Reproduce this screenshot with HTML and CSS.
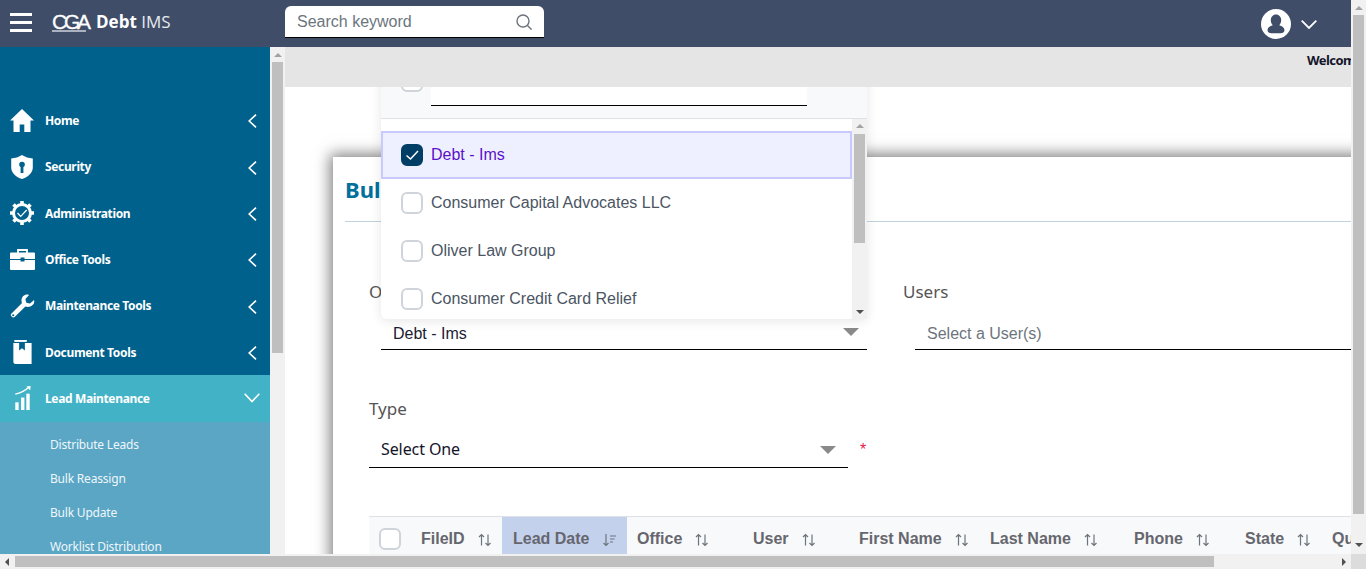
FILE: index.html
```html
<!DOCTYPE html>
<html lang="en">
<head>
<meta charset="utf-8">
<title>Debt IMS</title>
<link rel="stylesheet" href="styles.css">
</head>
<body>
<div class="shell">
  <div class="app">
    <header class="header">
      <div class="hamburger"><span></span><span></span><span></span></div>
      <div class="logo"><span class="logo-mark">CGA</span><span class="logo-sub"></span></div>
      <div class="brand"><b>Debt</b> IMS</div>
      <div class="search">
        <span class="search-text">Search keyword</span>
        <svg class="search-icon" viewBox="0 0 16 16"><circle cx="7" cy="7" r="6" fill="none" stroke="#6c757d" stroke-width="1.4"/><path d="M11.4 11.4 15.6 15.6" stroke="#6c757d" stroke-width="1.4" fill="none"/></svg>
      </div>
      <div class="user">
        <svg class="user-icon" viewBox="0 0 30 30"><circle cx="15" cy="15" r="15" fill="#fff"/><path d="M15 5.500c-3.100 0-5.200 2.500-5.200 5.800 0 2 .8 3.800 2 5-2.900.7-5.300 2.300-5.300 5 0 2 1.800 3 4 3h9c2.200 0 4-1 4-3 0-2.700-2.400-4.300-5.300-5 1.200-1.200 2-3 2-5 0-3.300-2.100-5.800-5.200-5.800z" fill="#3f4d68"/></svg>
        <svg class="user-chev" viewBox="0 0 16 9"><path d="M.7.7 8 8 15.300.7" fill="none" stroke="#fff" stroke-width="1.800"/></svg>
      </div>
    </header>
    <div class="body">
      <nav class="sidebar">
        <ul class="menu">
          <li class="menu-item">
            <svg class="menu-icon" viewBox="0 0 24 24"><path d="M12 1 0 12.500h3.500V24h6.200v-7.500h4.600V24h6.200V12.500H24z" fill="#fff"/></svg>
            <span class="menu-label">Home</span>
            <svg class="chev-left" viewBox="0 0 9 14"><path d="M8 .7 1.200 7 8 13.300" fill="none" stroke="#fff" stroke-width="1.600"/></svg>
          </li>
          <li class="menu-item">
            <svg class="menu-icon" viewBox="0 0 24 24"><path d="M12 0C9 2 5 3.200 1.200 3.500v9C1.200 18 6 22 12 24c6-2 10.800-6 10.800-11.500v-9C19 3.200 15 2 12 0z" fill="#fff"/><circle cx="12" cy="9.500" r="2.800" fill="#00618c"/><rect x="10.600" y="10" width="2.800" height="8" fill="#00618c"/></svg>
            <span class="menu-label">Security</span>
            <svg class="chev-left" viewBox="0 0 9 14"><path d="M8 .7 1.200 7 8 13.300" fill="none" stroke="#fff" stroke-width="1.600"/></svg>
          </li>
          <li class="menu-item">
            <svg class="menu-icon" viewBox="0 0 24 24"><circle cx="12" cy="12" r="8.500" fill="none" stroke="#fff" stroke-width="3"/><path d="M12 0v4M12 20v4M0 12h4M20 12h4M3.500 3.500l3 3M17.500 17.500l3 3M20.500 3.500l-3 3M6.500 17.500l-3 3" stroke="#fff" stroke-width="3.600"/><path d="M7.500 12l3.200 3.400 6-6.400" fill="none" stroke="#fff" stroke-width="1.300"/></svg>
            <span class="menu-label">Administration</span>
            <svg class="chev-left" viewBox="0 0 9 14"><path d="M8 .7 1.200 7 8 13.300" fill="none" stroke="#fff" stroke-width="1.600"/></svg>
          </li>
          <li class="menu-item">
            <svg class="menu-icon wide" viewBox="0 0 25 22"><path d="M8 5V2h9v3" fill="none" stroke="#fff" stroke-width="1.800"/><path d="M1 4.500h23a1 1 0 0 1 1 1V11H14.500V9.500h-4V11H0V5.500a1 1 0 0 1 1-1z" fill="#fff"/><path d="M0 12h10.500v1.500h4V12H25v9a1 1 0 0 1-1 1H1a1 1 0 0 1-1-1z" fill="#fff"/></svg>
            <span class="menu-label">Office Tools</span>
            <svg class="chev-left" viewBox="0 0 9 14"><path d="M8 .7 1.200 7 8 13.300" fill="none" stroke="#fff" stroke-width="1.600"/></svg>
          </li>
          <li class="menu-item">
            <svg class="menu-icon wide" viewBox="0 0 25 25"><path d="M24.500 6.200 20.300 10l-3.800-1-1-3.800L19.300 1C15.500-.5 11 2.500 11.500 7.500c.1 1 .2 1.500.5 2L.8 20.500c-1.800 1.800 1.700 5.300 3.500 3.500L15.500 13c5 1.700 10.500-2 9-6.800z" fill="#fff"/><circle cx="2.800" cy="22.200" r="1.100" fill="#00618c"/></svg>
            <span class="menu-label">Maintenance Tools</span>
            <svg class="chev-left" viewBox="0 0 9 14"><path d="M8 .7 1.200 7 8 13.300" fill="none" stroke="#fff" stroke-width="1.600"/></svg>
          </li>
          <li class="menu-item">
            <svg class="menu-icon" viewBox="0 0 24 25"><path d="M4 0h13v2H4z" fill="#fff"/><path d="M3 3h6v8l3-2.500 3 2.500V3h7v22H4.500L3 23.500z" fill="#fff"/></svg>
            <span class="menu-label">Document Tools</span>
            <svg class="chev-left" viewBox="0 0 9 14"><path d="M8 .7 1.200 7 8 13.300" fill="none" stroke="#fff" stroke-width="1.600"/></svg>
          </li>
          <li class="menu-item active">
            <svg class="menu-icon" viewBox="0 0 24 25"><path d="M5 8.500C10 7.500 15 5 19.500 1" fill="none" stroke="#fff" stroke-width="1.500"/><path d="M16.500.5 21 0l-.5 4.500z" fill="#fff"/><rect x="5" y="17" width="3.500" height="8" fill="#fff"/><rect x="11" y="12" width="3.500" height="13" fill="#fff"/><rect x="16.500" y="8" width="3.500" height="17" fill="#fff"/></svg>
            <span class="menu-label">Lead Maintenance</span>
            <svg class="chev-down" viewBox="0 0 16 10"><path d="M.7.7 8 8.500 15.300.7" fill="none" stroke="#fff" stroke-width="1.600"/></svg>
          </li>
        </ul>
        <ul class="submenu">
          <li>Distribute Leads</li>
          <li>Bulk Reassign</li>
          <li>Bulk Update</li>
          <li>Worklist Distribution</li>
        </ul>
      </nav>
      <div class="side-scroll">
        <span class="arrow-up"></span>
        <span class="side-thumb"></span>
      </div>
      <main class="content">
        <div class="topbar"><span class="welcome">Welcome Admin User</span></div>
        <div class="workspace">
          <section class="card">
            <h1 class="title">Bulk Update</h1>
            <hr class="rule">
            <div class="row first">
              <div class="field org">
                <label class="label">Organization</label>
                <div class="select indented"><span class="value-arial">Debt - Ims</span><span class="caret"></span></div>
              </div>
              <div class="field users">
                <label class="label">Users</label>
                <div class="select indented"><span class="placeholder">Select a User(s)</span></div>
              </div>
            </div>
            <div class="row second">
              <div class="field type">
                <label class="label">Type</label>
                <div class="select tall"><span class="value-ubuntu">Select One</span><span class="caret"></span></div>
              </div>
              <span class="req">*</span>
            </div>
            <div class="thead">
              <div class="th"><span class="check"></span></div>
              <div class="th">FileID<svg class="sort" viewBox="0 0 14 14"><use href="#sort-alt"/></svg></div>
              <div class="th sorted">Lead Date<svg class="sort" viewBox="0 0 14 14"><path d="M4 1v11.500M1.500 10 4 12.500 6.500 10" fill="none" stroke="#6c757d" stroke-width="1.200"/><path d="M8 3h6M8 6h4.500M8 9h3" stroke="#6c757d" stroke-width="1.200"/></svg></div>
              <div class="th">Office<svg class="sort" viewBox="0 0 14 14"><use href="#sort-alt"/></svg></div>
              <div class="th">User<svg class="sort" viewBox="0 0 14 14"><use href="#sort-alt"/></svg></div>
              <div class="th">First Name<svg class="sort" viewBox="0 0 14 14"><use href="#sort-alt"/></svg></div>
              <div class="th">Last Name<svg class="sort" viewBox="0 0 14 14"><use href="#sort-alt"/></svg></div>
              <div class="th">Phone<svg class="sort" viewBox="0 0 14 14"><use href="#sort-alt"/></svg></div>
              <div class="th">State<svg class="sort" viewBox="0 0 14 14"><use href="#sort-alt"/></svg></div>
              <div class="th">Queue</div>
            </div>
          </section>
          <div class="panel">
            <div class="panel-head">
              <span class="check"></span>
              <div class="filter"><svg class="filter-icon" viewBox="0 0 16 16"><circle cx="7" cy="7" r="6" fill="none" stroke="#6c757d" stroke-width="1.400"/><path d="M11.400 11.400 15.600 15.600" stroke="#6c757d" stroke-width="1.400"/></svg></div>
            </div>
            <div class="panel-body">
              <ul class="options">
                <li class="option selected"><span class="check on"><svg viewBox="0 0 22 22"><path d="M5.500 11.500 9.500 15 17 7" fill="none" stroke="#fff" stroke-width="1.500"/></svg></span>Debt - Ims</li>
                <li class="option"><span class="check"></span>Consumer Capital Advocates LLC</li>
                <li class="option"><span class="check"></span>Oliver Law Group</li>
                <li class="option"><span class="check"></span>Consumer Credit Card Relief</li>
              </ul>
              <div class="panel-scroll">
                <span class="arrow-up"></span>
                <span class="panel-thumb"></span>
                <span class="arrow-down"></span>
              </div>
            </div>
          </div>
        </div>
      </main>
    </div>
  </div>
  <div class="vscroll">
    <span class="arrow-up"></span>
    <span class="vthumb"></span>
    <span class="arrow-down dark"></span>
  </div>
  <div class="hscroll">
    <span class="arrow-left"></span>
    <span class="hthumb"></span>
    <span class="arrow-right"></span>
  </div>
  <div class="corner"></div>
</div>
<svg class="defs" width="0" height="0"><defs><g id="sort-alt" fill="none" stroke="#6c757d" stroke-width="1.200"><path d="M3.500 12.500V1.500M1 4 3.500 1.500 6 4"/><path d="M10 1.500v11M7.500 10 10 12.500 12.500 10"/></g></defs></svg>
</body>
</html>
```
FILE: styles.css
```css
* { box-sizing: border-box; }
html, body { margin: 0; height: 100%; overflow: hidden; }
body { font-family: "Liberation Sans", Arial, sans-serif; background: #fff; }
ul { list-style: none; margin: 0; padding: 0; }
.defs { position: absolute; }

.shell {
  display: grid;
  grid-template-columns: 1351px 15px;
  grid-template-rows: 554px 15px;
  width: 1366px;
  height: 569px;
}
.app { display: flex; flex-direction: column; min-width: 0; min-height: 0; overflow: hidden; }

/* header */
.header {
  flex: 0 0 47px;
  display: flex;
  align-items: center;
  background: #3f4d68;
  color: #fff;
  padding-left: 10px;
}
.hamburger { display: flex; flex-direction: column; gap: 5px; width: 22px; margin-top: -2px; }
.hamburger span { display: block; height: 3px; background: #fff; }
.logo { position: relative; width: 34px; margin-left: 20px; height: 18px; margin-top: -1px; }
.logo-mark {
  display: block;
  font: 400 21px/16px "Liberation Sans", sans-serif;
  letter-spacing: -3.200px;
  color: #fff;
  -webkit-text-stroke: .3px #fff;
}
.logo-sub { display: block; height: 2px; background: #aab2c0; }
.brand { margin-left: 10px; font: 400 17px/22px "Open Sans", sans-serif; color: #e6e9ee; width: 189px; margin-top: -3px; }
.brand b { color: #fff; }
.search {
  width: 259px;
  height: 32px;
  display: flex;
  align-items: center;
  justify-content: space-between;
  margin-top: -3px;
  padding: 0 12px;
  background: #fff;
  border-bottom: 1px solid #000;
  border-radius: 6px 6px 0 0;
}
.search-text { font-size: 16px; color: #6c757d; }
.search-icon { width: 16px; height: 16px; }
.user { display: flex; align-items: center; margin-left: auto; margin-right: 34px; gap: 10px; }
.user-icon { width: 30px; height: 30px; }
.user-chev { width: 16px; height: 9px; margin-top: 2px; }

/* body */
.body { flex: 1; display: flex; min-height: 0; }
.sidebar {
  flex: 0 0 270px;
  background: #00618c;
  padding-top: 50.300px;
  overflow: hidden;
  font-family: "Noto Sans", sans-serif;
  color: #fff;
}
.menu-item {
  display: flex;
  align-items: center;
  height: 46.330px;
  padding: 0 10px;
  font-size: 12px;
  font-weight: 700;
}
.menu-icon { width: 24px; height: 24px; flex: none; margin-right: 11px; }
.menu-icon.wide { width: 25px; margin-right: 10px; }
.menu-label { flex: 1; letter-spacing: -.35px; }
.chev-left { width: 9px; height: 14px; margin: 2px 3px 0 0; }
.chev-down { width: 16px; height: 10px; margin: 0 0 0 0; }
.menu-item.active { background: #42b2c6; }
.submenu { background: #5ba6c5; height: 140px; padding-top: 6px; }
.submenu li {
  height: 34px;
  line-height: 34px;
  padding-left: 50px;
  font-size: 12px;
  color: #eef6fa;
  letter-spacing: -.2px;
}
.side-scroll {
  flex: 0 0 15px;
  background: #f1f1f1;
  display: flex;
  flex-direction: column;
  align-items: center;
  padding-top: 6px;
}
.side-thumb { display: block; width: 11px; height: 291px; margin-top: 5px; background: #bfbfbf; }

.arrow-up, .arrow-down, .arrow-left, .arrow-right { display: block; width: 0; height: 0; flex: none; }
.arrow-up { border-left: 4px solid transparent; border-right: 4px solid transparent; border-bottom: 4px solid #a3a3a3; }
.arrow-down { border-left: 4px solid transparent; border-right: 4px solid transparent; border-top: 4px solid #505050; }
.arrow-left { border-top: 4px solid transparent; border-bottom: 4px solid transparent; border-right: 4px solid #505050; }
.arrow-right { border-top: 4px solid transparent; border-bottom: 4px solid transparent; border-left: 4px solid #505050; }

/* content */
.content { flex: 1; min-width: 0; display: flex; flex-direction: column; overflow: hidden; }
.topbar {
  position: relative;
  z-index: 3;
  flex: 0 0 40px;
  background: #e5e5e5;
  padding: 5px 0 0 1022px;
  white-space: nowrap;
  overflow: hidden;
  font: 700 13px/17px "Noto Sans", sans-serif;
  letter-spacing: -.55px;
  color: #14142b;
}
.workspace { position: relative; flex: 1; min-height: 0; padding: 70px 0 0 48px; background: #fff; }

.card {
  width: 1100px;
  height: 500px;
  padding: 18px 0 0 12px;
  background: #fff;
  box-shadow: 0 0 14px 3px rgba(0,0,0,.5);
}
.title { margin: 0 0 18px; font: 700 22px/28px "Noto Sans", sans-serif; color: #00709c; }
.rule { margin: 0; border: 0; border-top: 1px solid #bfd4dc; }
.row { display: flex; margin-left: 24px; }
.row.first { margin-top: 60px; }
.row.second { margin-top: 49px; }
.label { display: block; font: 400 17px/20px "Noto Sans", sans-serif; color: #555; margin-bottom: 16px; }
.field.org { width: 534px; }
.field.users { width: 500px; }
.field.type { width: 479px; }
.field.type .label { margin-bottom: 14px; }
.select {
  display: flex;
  align-items: center;
  justify-content: space-between;
  height: 32px;
  padding: 0 8px 0 12px;
  border-bottom: 1px solid #000;
}
.select.indented { margin-left: 12px; }
.field.org .select { width: 486px; }
.select.tall { height: 35px; padding: 0 12px 2px 12px; }
.select.tall .caret { margin-top: 2px; }
.value-arial { font-size: 16px; color: #1c1c33; }
.value-ubuntu { font: 400 16px/20px "Noto Sans", sans-serif; color: #14142b; letter-spacing: -.1px; }
.placeholder { font-size: 16px; color: #6c757d; }
.caret { width: 0; height: 0; border-left: 8px solid transparent; border-right: 8px solid transparent; border-top: 8px solid #8a8a8a; margin-top: -4px; }
.req { margin: 44px 0 0 12px; font: 400 16px/14px "Liberation Sans", sans-serif; color: #e8174a; }

.thead {
  display: grid;
  grid-template-columns: 42px 91px 125px 116px 106px 131px 144px 111px 87px 100px;
  height: 39px;
  margin: 48px 0 0 24px;
  background: #f8f9fa;
  border-top: 1px solid #dee2e6;
  font-weight: 700;
  font-size: 16px;
  color: #66666e;
}
.th { display: flex; align-items: center; padding: 6px 0 0 10px; white-space: nowrap; overflow: hidden; }
.th.sorted { background: #c3d1ed; padding-left: 11px; }
.sort { width: 14px; height: 14px; margin: 2px 0 0 13px; flex: none; }

.check {
  display: block;
  flex: none;
  width: 22px;
  height: 22px;
  background: #fff;
  border: 2px solid #ced4da;
  border-radius: 6px;
}
.check.on { background: #003e66; border-color: #003e66; position: relative; }
.check.on svg { position: absolute; left: -2px; top: -2px; width: 22px; height: 22px; }

/* dropdown */
.panel {
  position: absolute;
  z-index: 2;
  left: 96px;
  top: -37px;
  width: 486px;
  height: 269px;
  display: flex;
  flex-direction: column;
  background: #fff;
  border-radius: 0 0 6px 6px;
  box-shadow: 0 2px 12px rgba(0,0,0,.1);
}
.panel-head {
  flex: 0 0 69px;
  display: flex;
  align-items: flex-start;
  padding: 20px 0 0 20px;
  background: #f8f9fa;
  border-bottom: 1px solid #dee2e6;
}
.filter {
  position: relative;
  width: 376px;
  height: 46px;
  margin: -10px 0 0 8px;
  background: #fff;
  border-bottom: 1px solid #000;
}
.filter-icon { position: absolute; right: 6px; top: 11px; width: 16px; height: 16px; }
.panel-body { flex: 1; display: flex; min-height: 0; }
.options { flex: 1; padding-top: 12px; overflow: hidden; }
.option {
  display: flex;
  align-items: center;
  gap: 8px;
  height: 48px;
  padding-left: 18px;
  font-size: 16px;
  color: #4b5563;
  border: 2px solid transparent;
}
.option.selected { background: #eef0ff; border-color: #c7c9ff; color: #5b10c9; }
.panel-scroll {
  flex: 0 0 15px;
  display: flex;
  flex-direction: column;
  align-items: center;
  background: #f1f1f1;
  padding-top: 5px;
}
.panel-thumb { display: block; width: 11px; height: 109px; margin-top: 6px; background: #bfbfbf; }
.panel-scroll .arrow-down { margin-top: auto; margin-bottom: 5px; }

/* page scrollbars */
.vscroll {
  display: flex;
  flex-direction: column;
  align-items: center;
  background: #f1f1f1;
  padding-top: 6px;
}
.vthumb { display: block; width: 11px; height: 499px; margin-top: 5px; background: #bfbfbf; }
.vscroll .arrow-down { margin-top: auto; margin-bottom: 7px; }
.hscroll {
  display: flex;
  align-items: center;
  background: #f1f1f1;
  padding-left: 5px;
}
.hthumb { display: block; width: 1199px; height: 11px; margin-left: 6px; background: #bfbfbf; }
.hscroll .arrow-right { margin-left: auto; margin-right: 5px; }
.corner { background: #dcdcdc; }
```
